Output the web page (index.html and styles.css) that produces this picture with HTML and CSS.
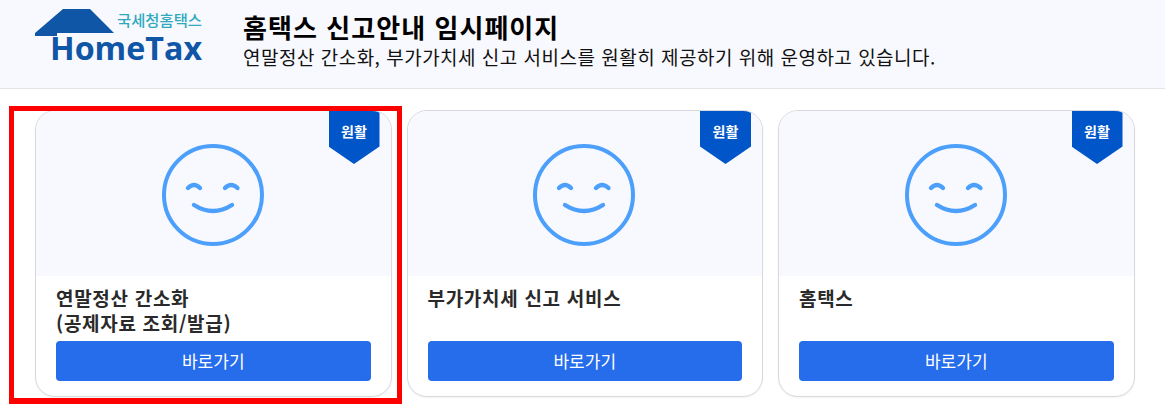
FILE: index.html
```html
<!DOCTYPE html>
<html lang="ko">
<head>
<meta charset="utf-8">
<title>홈택스 신고안내 임시페이지</title>
<link rel="stylesheet" href="styles.css">
</head>
<body>
<header class="top">
  <svg class="logo" width="202" height="88" viewBox="0 0 202 88" role="img" aria-label="국세청홈택스 HomeTax">
    <path class="roof" d="M35 33 L63 9 H90 L114 33 H57 V36 H35 Z"/>
    <text class="logo-ko" x="117" y="26" textLength="85" lengthAdjust="spacingAndGlyphs">국세청홈택스</text>
    <text class="logo-en" x="50" y="60" textLength="152" lengthAdjust="spacingAndGlyphs">HomeTax</text>
  </svg>
  <div class="intro">
    <h1>홈택스 신고안내 임시페이지</h1>
    <p>연말정산 간소화, 부가가치세 신고 서비스를 원활히 제공하기 위해 운영하고 있습니다.</p>
  </div>
</header>
<main class="cards">
  <article class="card">
    <div class="visual">
      <span class="badge">원활</span>
      <svg class="face" width="104" height="104" viewBox="0 0 104 104"><circle cx="51" cy="51" r="49"/><path d="M26 44 Q32 38 38 44"/><path d="M63 44 Q69 38 75.5 44"/><path d="M32 61 Q51 73 70 61"/></svg>
    </div>
    <div class="body"><h2>연말정산 간소화<br>(공제자료 조회/발급)</h2><a class="go" href="#">바로가기</a></div>
  </article>
  <article class="card">
    <div class="visual">
      <span class="badge">원활</span>
      <svg class="face" width="104" height="104" viewBox="0 0 104 104"><circle cx="51" cy="51" r="49"/><path d="M26 44 Q32 38 38 44"/><path d="M63 44 Q69 38 75.5 44"/><path d="M32 61 Q51 73 70 61"/></svg>
    </div>
    <div class="body"><h2>부가가치세 신고 서비스</h2><a class="go" href="#">바로가기</a></div>
  </article>
  <article class="card">
    <div class="visual">
      <span class="badge">원활</span>
      <svg class="face" width="104" height="104" viewBox="0 0 104 104"><circle cx="51" cy="51" r="49"/><path d="M26 44 Q32 38 38 44"/><path d="M63 44 Q69 38 75.5 44"/><path d="M32 61 Q51 73 70 61"/></svg>
    </div>
    <div class="body"><h2>홈택스</h2><a class="go" href="#">바로가기</a></div>
  </article>
</main>
<div class="highlight"></div>
</body>
</html>
```
FILE: styles.css
```css
* { box-sizing: border-box; }
html, body { margin: 0; height: 404px; overflow: hidden; }
body {
  position: relative;
  background: #fff;
  font-family: "Noto Sans CJK KR", "Noto Sans", sans-serif;
  color: #000;
}
.top {
  display: flex;
  align-items: flex-start;
  height: 89px;
  background: #f8f9fe;
  border-bottom: 1px solid #e2e4e8;
}
.logo { flex: none; display: block; }
.roof { fill: #0f56a6; }
.logo-ko { fill: #2fa9be; font: 500 15px "Noto Sans CJK KR", sans-serif; }
.logo-en { fill: #0f56a6; font: 700 32px "Open Sans", sans-serif; }
.intro { margin: 11px 0 0 41px; }
.intro h1 { margin: 0; font-size: 26px; line-height: 32px; font-weight: 700; letter-spacing: 1.05px; }
.intro p { margin: 0; font-size: 19px; line-height: 27px; font-weight: 400; color: #111; letter-spacing: .49px; }
.cards {
  display: grid;
  grid-template-columns: repeat(3, 356.5px);
  column-gap: 15px;
  padding: 21px 0 0 35px;
}
.card {
  height: 287px;
  background: #fff;
  border: 1px solid #d8d9de;
  border-radius: 20px;
  overflow: hidden;
  display: flex;
  flex-direction: column;
  box-shadow: 0 1px 2px rgba(0,0,0,.05);
}
.visual {
  position: relative;
  height: 165px;
  background: #f8f9fe;
  display: flex;
  justify-content: center;
  padding: 33px 0 0 1px;
}
.face { display: block; }
.face circle, .face path { fill: none; stroke: #4c9ffb; stroke-linecap: round; }
.face circle { stroke-width: 4px; }
.face path { stroke-width: 4.4px; }
.badge {
  position: absolute;
  top: 0;
  right: 11px;
  width: 51px;
  height: 53px;
  padding-top: 9px;
  background: #0056c8;
  color: #fff;
  font-size: 14px;
  line-height: 22px;
  font-weight: 700;
  text-align: center;
  clip-path: polygon(0 0, 100% 0, 100% 67%, 50% 100%, 0 67%);
}
.body {
  flex: 1;
  display: flex;
  flex-direction: column;
  padding: 9px 20px 15px;
}
.body h2 {
  flex: 1;
  margin: 0;
  font-size: 19px;
  line-height: 25px;
  font-weight: 700;
  color: #2a2a2a;
  letter-spacing: .7px;
}
.go {
  display: block;
  height: 40px;
  background: #256deb;
  border-radius: 4px;
  color: #fff;
  font-size: 17px;
  line-height: 39px;
  text-align: center;
  text-decoration: none;
}
.highlight {
  position: absolute;
  left: 9px;
  top: 106px;
  width: 393px;
  height: 298px;
  border: 5px solid #f00;
  border-bottom-width: 6px;
  pointer-events: none;
}
```
